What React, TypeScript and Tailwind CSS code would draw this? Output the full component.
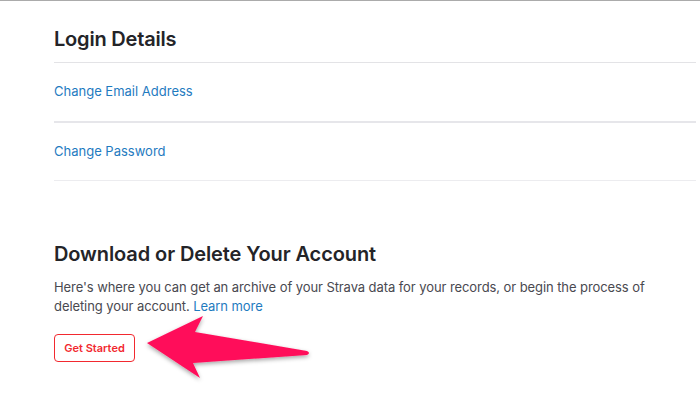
export default function App() {
  return (
    <div className="relative w-[700px] h-[400px] bg-white border-t border-[#ababab] overflow-hidden" style={{ fontFamily: "Inter, 'Liberation Sans', sans-serif" }}>
      <div className="pl-[54px] pr-[4px]">
        <h2 className="pt-[26px] pb-[11px] text-[20px] leading-[24px] font-semibold text-[#242428] tracking-[-0.2px]">Login Details</h2>
        <div className="border-t border-[#e3e3e6]">
          <a className="flex items-center h-[58px] text-[13px] text-[#1f7bbf]">Change Email Address</a>
        </div>
        <div className="border-t-2 border-[#e6e6ea]">
          <a className="flex items-center h-[57px] text-[13px] text-[#1f7bbf]">Change Password</a>
        </div>
        <div className="border-t border-[#ececef]" />
        <h2 className="mt-[61px] text-[20px] leading-[24px] font-semibold text-[#242428] tracking-[-0.1px]">Download or Delete Your Account</h2>
        <p className="mt-[12px] w-[600px] text-[13px] leading-[19px] text-[#494950] tracking-[-0.08px]">
          Here's where you can get an archive of your Strava data for your records, or begin the process of deleting your account. <a className="text-[#1f7bbf]">Learn more</a>
        </p>
        <button className="mt-[18px] h-[28px] w-[81px] rounded-[4px] border border-[#f2292f] text-[11px] font-semibold text-[#f2292f]">Get Started</button>
      </div>
      <svg className="absolute left-0 top-0" width="700" height="400" viewBox="0 0 700 400">
        <defs>
          <filter id="sh" x="-20%" y="-20%" width="140%" height="160%">
            <feDropShadow dx="0" dy="2" stdDeviation="2" floodColor="#000" floodOpacity="0.35" />
          </filter>
        </defs>
        <path d="M147 342 L203 315 L195 331 L307 350 Q311 352 307 354 L193 362 L200 377 Z" fill="#ff0f5a" filter="url(#sh)" />
      </svg>
    </div>
  );
}
